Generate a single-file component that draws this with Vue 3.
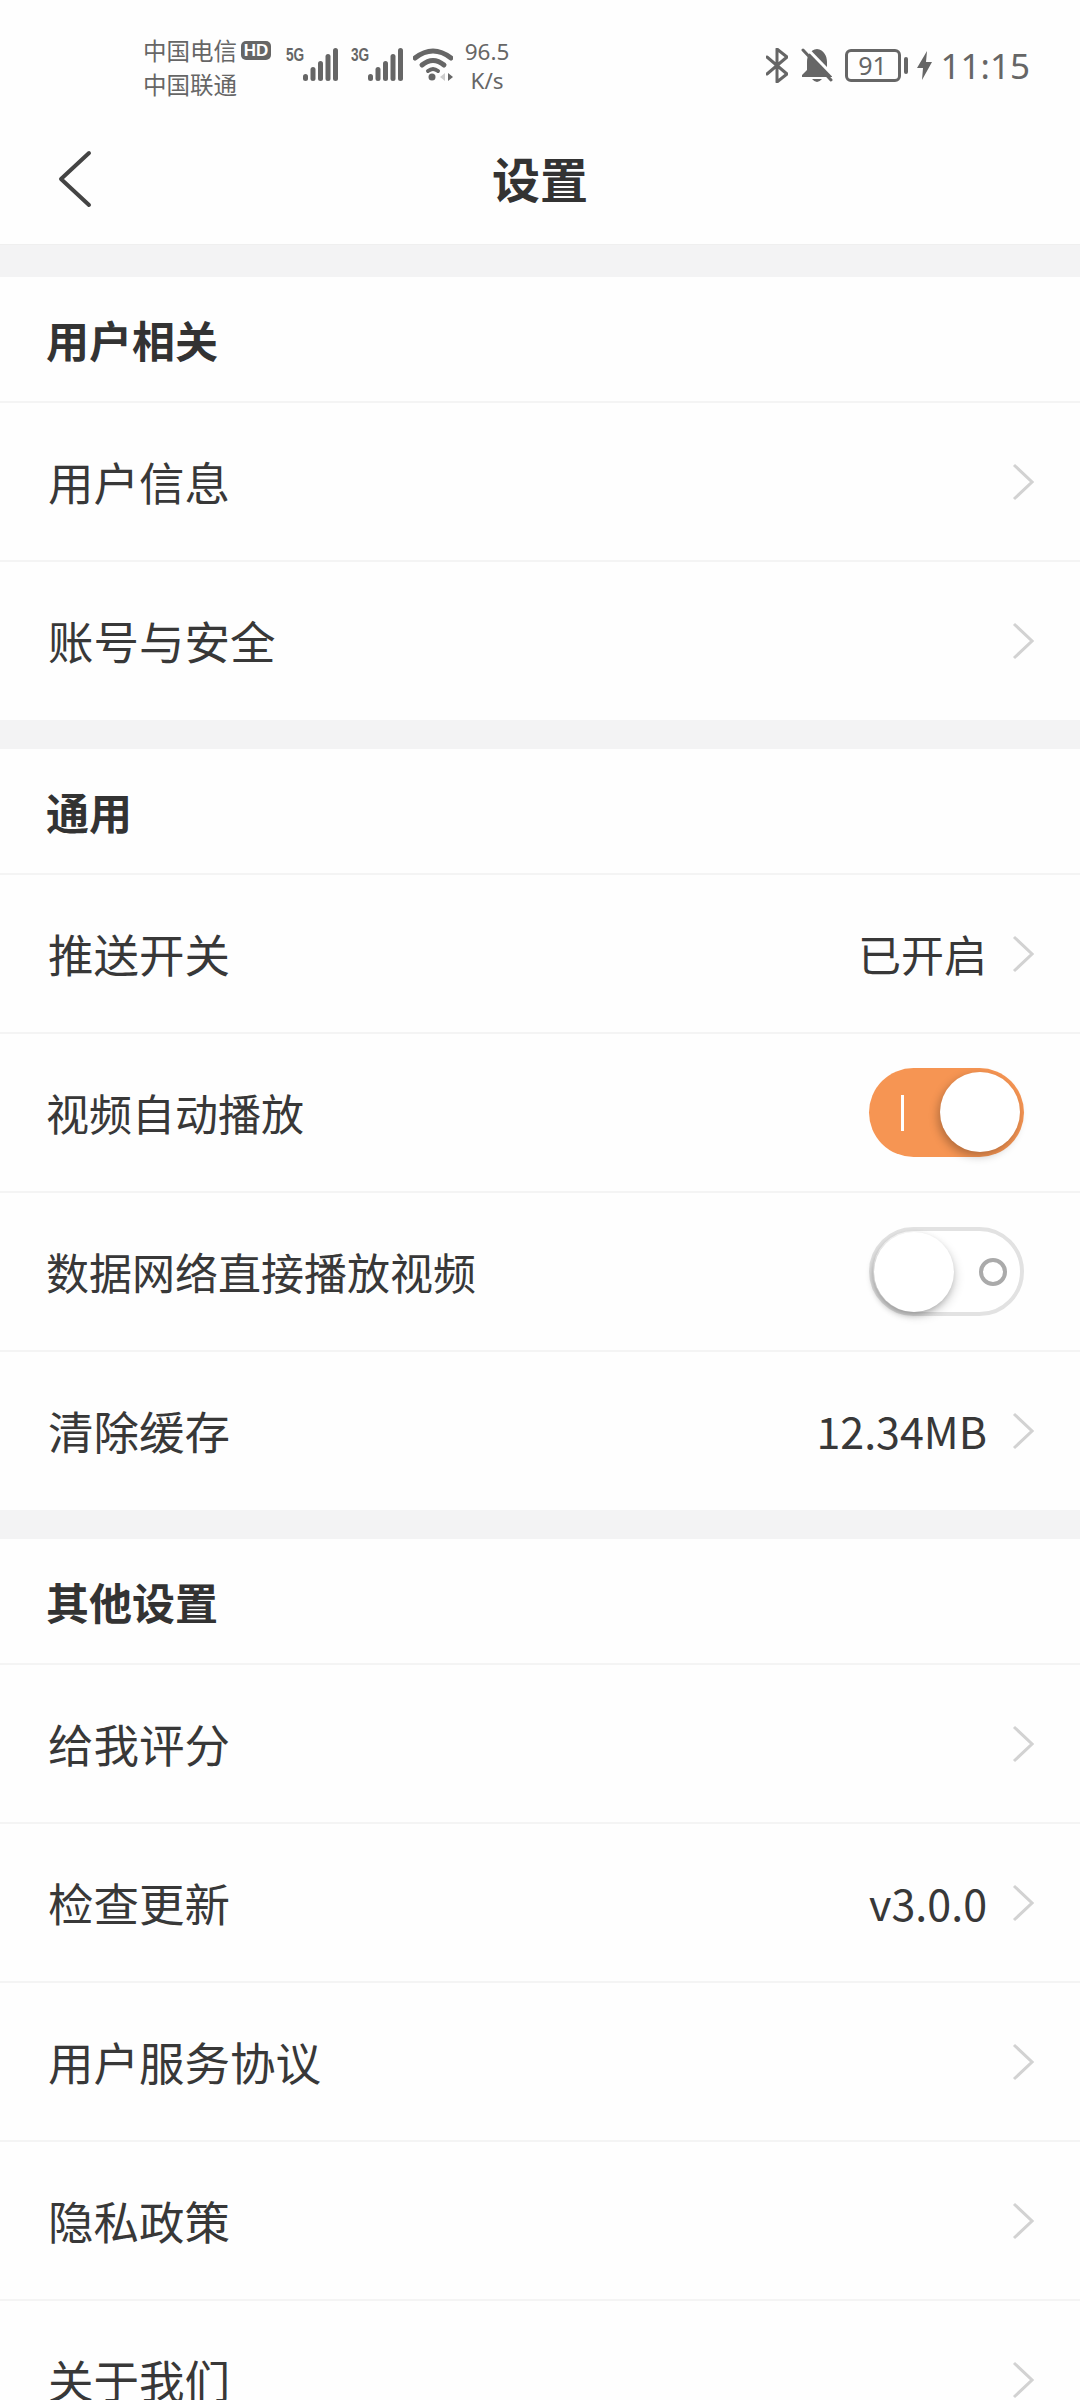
<template>
  <div class="page">
    <div class="status-bar">
      <div class="carriers">
        <div class="carrier-line">中国电信<span class="hd">HD</span></div>
        <div class="carrier-line">中国联通</div>
      </div>
      <div v-for="net in ['5G', '3G']" :key="net" class="signal">
        <span class="net-type">{{ net }}</span>
        <svg width="35" height="34" viewBox="0 0 35 34">
          <rect x="0" y="26" width="5" height="7" rx="2.5" fill="#666" />
          <rect x="7.5" y="19" width="5" height="14" rx="2.5" fill="#666" />
          <rect x="15" y="13" width="5" height="20" rx="2.5" fill="#666" />
          <rect x="22.5" y="6" width="5" height="27" rx="2.5" fill="#666" />
          <rect x="30" y="0" width="5" height="33" rx="2.5" fill="#666" />
        </svg>
      </div>
      <svg class="wifi" width="40" height="34" viewBox="0 0 40 34">
        <path d="M2 10 Q20 -4 38 10" fill="none" stroke="#666" stroke-width="5" stroke-linecap="round" />
        <path d="M9 17 Q20 8 31 17" fill="none" stroke="#666" stroke-width="5" stroke-linecap="round" />
        <path d="M15 23 Q20 19 25 23" fill="none" stroke="#666" stroke-width="4" stroke-linecap="round" />
        <circle cx="19" cy="29" r="3.5" fill="#666" />
        <path d="M32 25 L27 29 L32 33 Z" fill="#ccc" />
        <path d="M35 25 L40 29 L35 33 Z" fill="#666" />
      </svg>
      <div class="speed">
        <span>96.5</span>
        <span>K/s</span>
      </div>

      <div class="status-right">
        <svg width="22" height="35" viewBox="0 0 22 35">
          <path d="M1 9 L21 26 L11 34 L11 1 L21 9 L1 26" fill="none" stroke="#666" stroke-width="3" stroke-linejoin="round" stroke-linecap="round" />
        </svg>
        <svg class="bell" width="32" height="35" viewBox="0 0 32 35">
          <path d="M16 1 C9 2 6 8 6 14 L6 22 L1 27 L1 29 L31 29 L31 27 L26 22 L26 14 C26 8 23 2 16 1 Z" fill="#666" />
          <path d="M11 31 Q16 37 21 31 Z" fill="#666" />
          <path d="M4.5 -1 L33.5 29" stroke="#fff" stroke-width="3" />
          <path d="M2 2 L30 32" stroke="#666" stroke-width="3" stroke-linecap="round" />
        </svg>
        <div class="battery"><span>91</span></div>
        <span class="battery-nub"></span>
        <svg class="bolt" width="15" height="29" viewBox="0 0 15 29">
          <path d="M10 0 L0 17 L6 17 L5 29 L15 11 L9 11 Z" fill="#666" />
        </svg>
        <span class="clock">11:15</span>
      </div>
    </div>

    <div class="nav-bar">
      <svg class="back" width="36" height="58" viewBox="0 0 36 58">
        <path d="M33 3 L5 29 L33 55" fill="none" stroke="#444" stroke-width="4" stroke-linecap="round" stroke-linejoin="round" />
      </svg>
      <span class="nav-title">设置</span>
    </div>

    <section v-for="group in groups" :key="group.title" class="group">
      <div class="group-title">{{ group.title }}</div>
      <div v-for="item in group.items" :key="item.label" class="row" :class="{ 'row-switch': item.toggle !== undefined }">
        <span class="label">{{ item.label }}</span>
        <template v-if="item.toggle !== undefined">
          <div class="switch" :class="item.toggle ? 'on' : 'off'">
            <span class="mark"></span>
            <span class="knob"></span>
          </div>
        </template>
        <template v-else>
          <span v-if="item.value" class="value">{{ item.value }}</span>
          <svg class="chevron" width="22" height="38" viewBox="0 0 22 38">
            <path d="M2 2 L20 19 L2 36" fill="none" stroke="#d2d2d2" stroke-width="3" />
          </svg>
        </template>
      </div>
    </section>
  </div>
</template>

<script setup>
const groups = [
  {
    title: "用户相关",
    items: [{ label: "用户信息" }, { label: "账号与安全" }],
  },
  {
    title: "通用",
    items: [
      { label: "推送开关", value: "已开启" },
      { label: "视频自动播放", toggle: true },
      { label: "数据网络直接播放视频", toggle: false },
      { label: "清除缓存", value: "12.34MB" },
    ],
  },
  {
    title: "其他设置",
    items: [
      { label: "给我评分" },
      { label: "检查更新", value: "v3.0.0" },
      { label: "用户服务协议" },
      { label: "隐私政策" },
      { label: "关于我们" },
    ],
  },
]
</script>

<style scoped>
.page {
  width: 1080px;
  height: 2400px;
  overflow: hidden;
  background: #fefefe;
  color: #383838;
  font-family: "Noto Sans CJK SC", "Noto Sans", sans-serif;
}
.status-bar {
  height: 115px;
  padding: 33px 50px 0 143px;
  box-sizing: border-box;
  display: flex;
  align-items: flex-start;
  color: #666;
}
.carriers {
  width: 143px;
  font-size: 23.5px;
  line-height: 34px;
}
.carrier-line {
  display: flex;
  align-items: center;
  height: 34px;
}
.hd {
  margin-left: 4px;
  width: 30px;
  height: 19px;
  border-radius: 5px;
  background: #666;
  color: #fff;
  font-size: 17px;
  line-height: 19px;
  font-weight: 700;
  text-align: center;
  font-family: "Liberation Sans", sans-serif;
}
.signal {
  display: flex;
  align-items: flex-start;
  margin-top: 15px;
  margin-right: 13px;
}
.net-type {
  width: 17px;
  font-family: "Liberation Sans", sans-serif;
  font-size: 19px;
  line-height: 14px;
  font-weight: 700;
  display: inline-block;
  transform: scaleX(0.72);
  transform-origin: left top;
  white-space: nowrap;
}
.wifi {
  margin-top: 15px;
  margin-left: -3px;
}
.speed {
  margin-left: 12px;
  width: 44px;
  display: flex;
  flex-direction: column;
  align-items: center;
  font-family: "Noto Sans", sans-serif;
  font-size: 22.5px;
  line-height: 29px;
  margin-top: 4px;
}
.status-right {
  margin-left: auto;
  display: flex;
  align-items: center;
  height: 35px;
  margin-top: 15px;
}
.bell {
  margin-left: 13px;
}
.battery {
  margin-left: 12px;
  width: 56px;
  height: 33px;
  box-sizing: border-box;
  border: 3px solid #666;
  border-radius: 6px;
  font-family: "Noto Sans", sans-serif;
  font-size: 25px;
  line-height: 27px;
  text-align: center;
}
.battery-nub {
  margin-left: 3px;
  width: 4px;
  height: 17px;
  border-radius: 2px;
  background: #666;
}
.bolt {
  margin-left: 9px;
}
.clock {
  margin-left: 9px;
  font-family: "Noto Sans", sans-serif;
  font-size: 35px;
  line-height: 35px;
  color: #666;
}
.nav-bar {
  position: relative;
  height: 130px;
  padding-bottom: 6px;
  display: flex;
  align-items: center;
  justify-content: center;
  border-bottom: 1px solid #efefef;
  box-sizing: border-box;
}
.back {
  position: absolute;
  left: 56px;
  top: 35px;
}
.nav-title {
  font-size: 48px;
  font-weight: 700;
  color: #333;
}
.group {
  border-top: 29px solid #f3f3f4;
}
.nav-bar + .group {
  border-top-width: 32px;
}
.group:last-child {
  border-top-width: 29px;
}
.group-title {
  height: 126px;
  box-sizing: border-box;
  padding-left: 46px;
  display: flex;
  align-items: center;
  font-size: 43px;
  font-weight: 700;
  color: #333;
  border-bottom: 2px solid #f4f4f4;
}
.row {
  height: 159px;
  box-sizing: border-box;
  padding: 0 46px 0 48px;
  display: flex;
  align-items: center;
  border-bottom: 2px solid #f4f4f4;
  font-size: 45.5px;
}
.group .row:last-child {
  height: 158px;
  border-bottom: none;
}
.row-switch {
  font-size: 43px;
  padding-left: 46px;
  padding-right: 56px;
}
.label {
  flex: 1;
  margin-top: -2px;
}
.value {
  font-size: 43px;
  margin-top: -2px;
  margin-right: 25px;
}
.switch {
  position: relative;
  width: 155px;
  height: 89px;
  box-sizing: border-box;
  border-radius: 45px;
}
.switch.on {
  background: #f69553;
}
.switch.off {
  background: #fff;
  border: 4px solid #e2e2e2;
}
.knob {
  position: absolute;
  width: 80px;
  height: 80px;
  border-radius: 50%;
  background: #fff;
}
.on .knob {
  right: 4px;
  top: 4px;
  box-shadow: -2px 4px 10px rgba(0, 0, 0, 0.28);
}
.off .knob {
  left: 1px;
  top: 1px;
  box-shadow: -2px 3px 6px rgba(0, 0, 0, 0.25), 3px 5px 10px rgba(0, 0, 0, 0.12);
}
.on .mark {
  position: absolute;
  left: 32px;
  top: 27px;
  width: 3px;
  height: 36px;
  background: #fff;
}
.off .mark {
  position: absolute;
  left: 106px;
  top: 27px;
  width: 28px;
  height: 28px;
  box-sizing: border-box;
  border: 4px solid #aaa;
  border-radius: 50%;
}
</style>

<style>
html,
body {
  margin: 0;
  background: #fff;
}
</style>
